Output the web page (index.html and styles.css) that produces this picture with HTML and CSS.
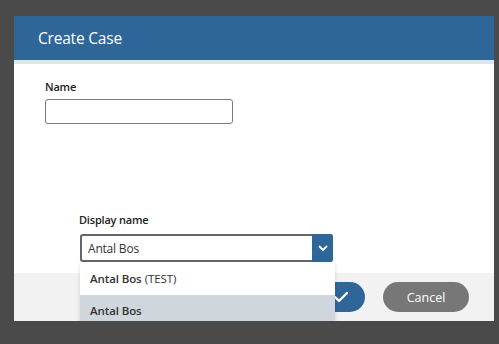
FILE: index.html
```html
<!DOCTYPE html>
<html lang="en">
<head>
    <meta charset="UTF-8">
    <meta name="viewport" content="width=device-width, initial-scale=1.0">
    <title>Create Case</title>
<link rel="stylesheet" href="styles.css">
</head>
<body>
    <div class="dialog">
        <div class="dialog__header">
            <h2>Create Case</h2>
        </div>

        <div class="dialog__body">
            <div class="field">
                <label for="name">Name</label>
                <input type="text" id="name" class="text-input">
            </div>

            <div class="field field--display">
                <label>Display name</label>
                <div class="select">
                    <span class="select__value">Antal Bos</span>
                    <span class="select__btn">
                        <svg width="10" height="7" viewBox="0 0 10 7"><path d="M1.5 1.5 L5 5 L8.5 1.5" fill="none" stroke="#fff" stroke-width="1.8" stroke-linecap="round" stroke-linejoin="round"/></svg>
                    </span>
                    <ul class="select__list">
                        <li class="select__item"><b>Antal Bos</b> (TEST)</li>
                        <li class="select__item select__item--active"><b>Antal Bos</b></li>
                    </ul>
                </div>
            </div>
        </div>

        <div class="dialog__footer">
            <button class="btn btn--ok">
                <svg width="16" height="12" viewBox="0 0 16 12"><path d="M2 6 L6 10 L14 2" fill="none" stroke="#fff" stroke-width="2.4" stroke-linecap="round" stroke-linejoin="round"/></svg>
            </button>
            <button class="btn btn--cancel">Cancel</button>
        </div>
    </div>
</body>
</html>
```

FILE: styles.css
```css
* {
  margin: 0;
  padding: 0;
  box-sizing: border-box;
}
body {
    font-family: "Open Sans", "Noto Sans", sans-serif;
    background: #4a4a4a;
    color: #222;
}
.dialog {
    width: 480px;
    margin: 16px 0 0 14px;
    background: #fff;
}
.dialog__header {
    height: 48px;
    background: #2e6699;
    border-bottom: 4px solid #dde4ea;
    padding: 0 24px;
    display: flex;
    align-items: center;
}
.dialog__header h2 {
    color: #fff;
    font-weight: 400;
    font-size: 15.5px;
    letter-spacing: -0.2px;
}
.dialog__body {
    height: 209px;
    padding: 15px 0 0 31px;
}
.field label {
    display: block;
    font-size: 11px;
    font-weight: 600;
    color: #222;
    margin-bottom: 5px;
    letter-spacing: -0.2px;
}
.text-input {
    width: 188px;
    height: 25px;
    border: 1px solid #7a7a7a;
    border-radius: 3px;
}
.field--display {
    margin: 88px 0 0 34px;
    width: 254px;
}
.field--display label {
    margin-bottom: 7px;
}
.select {
    position: relative;
    height: 28px;
    border: 2px solid #666;
    border-right: none;
    border-radius: 3px;
    display: flex;
    align-items: center;
    justify-content: space-between;
    margin-left: 1px;
}
.select__value {
    font-size: 12px;
    padding-left: 6px;
    color: #333;
    letter-spacing: -0.2px;
}
.select__btn {
    width: 21px;
    height: 28px;
    margin: -2px 0;
    background: #2e6699;
    border-radius: 0 3px 3px 0;
    display: flex;
    align-items: center;
    justify-content: center;
}
.select__list {
    list-style: none;
    position: absolute;
    top: 26px;
    left: -2px;
    width: 255px;
    background: #fff;
    border-bottom: 1px solid #c4ccd3;
    box-shadow: 0 2px 4px rgba(0, 0, 0, 0.15);
    z-index: 2;
}
.select__item {
    height: 33px;
    padding-left: 10px;
    display: flex;
    align-items: center;
    font-size: 11.5px;
    color: #333;
    letter-spacing: -0.1px;
}
.select__item b {
    font-weight: 600;
    margin-right: 3px;
}
.select__item--active {
    height: 31px;
    background: #cfd6dc;
}
.dialog__footer {
    height: 48px;
    background: #f2f2f2;
    display: flex;
    align-items: center;
    justify-content: flex-end;
    gap: 18px;
    padding-right: 25px;
}
.btn {
    width: 86px;
    height: 30px;
    border: none;
    border-radius: 15px;
    font-family: inherit;
    font-size: 12.5px;
    color: #fff;
    display: flex;
    align-items: center;
    justify-content: center;
}
.btn--ok {
    background: #2e6699;
    padding-left: 38px;
}
.btn--cancel {
    background: #777;
}
```
